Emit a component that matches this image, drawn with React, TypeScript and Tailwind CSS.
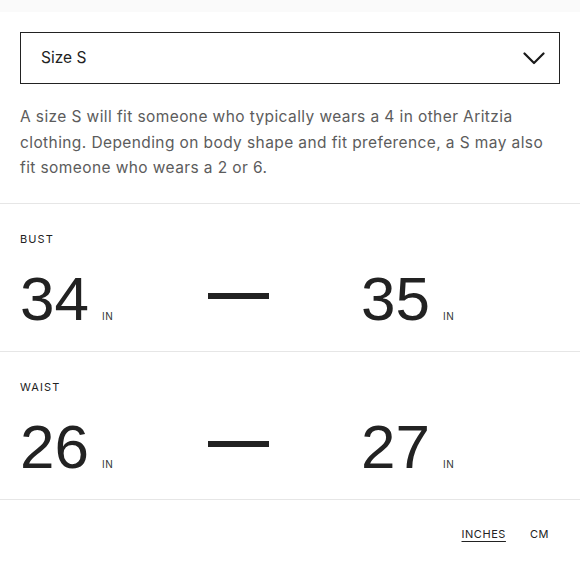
import React from 'react';

interface Measurement {
  label: string;
  min: number;
  max: number;
}

const MEASUREMENTS: Measurement[] = [
  { label: 'Bust', min: 34, max: 35 },
  { label: 'Waist', min: 26, max: 27 },
];

const DESCRIPTION = [
  'A size S will fit someone who typically wears a 4 in other Aritzia',
  'clothing. Depending on body shape and fit preference, a S may also',
  'fit someone who wears a 2 or 6.',
];

const Chevron: React.FC = () => (
  <svg width="22" height="13" viewBox="0 0 22 13" fill="none" className="text-[#1a1a1a]">
    <path d="M1.5 1.5 L11 11 L20.5 1.5" stroke="currentColor" strokeWidth="2.2" strokeLinecap="round" strokeLinejoin="round" />
  </svg>
);

const Value: React.FC<{ value: number }> = ({ value }) => (
  <div className="flex items-baseline">
    <span className="text-[62px] leading-none text-[#222]" style={{ fontFamily: '"Liberation Sans", Arial, sans-serif' }}>
      {value}
    </span>
    <span className="ml-[13px] text-[10px] tracking-[0.06em] text-[#333]">IN</span>
  </div>
);

const MeasurementRow: React.FC<{ m: Measurement }> = ({ m }) => (
  <div className="border-t border-[#e6e6e6] px-5 pt-[28px] pb-[22px]">
    <p className="text-[11px] leading-[14px] tracking-[0.1em] uppercase text-[#222]">{m.label}</p>
    <div className="mt-[23px] flex items-center h-[60px]">
      <div className="w-[188px]">
        <Value value={m.min} />
      </div>
      <div className="w-[61px] h-[6px] bg-[#222] mb-[6px]" />
      <div className="pl-[92px]">
        <Value value={m.max} />
      </div>
    </div>
  </div>
);

export default function App() {
  return (
    <div className="w-[580px] h-[580px] bg-white overflow-hidden" style={{ fontFamily: 'Inter, "Noto Sans", sans-serif' }}>
      <div className="h-3 bg-[#fafafa]" />
      <div className="px-5 pt-5">
        <button className="w-full h-[52px] border-[1.5px] border-[#222] flex items-center justify-between pl-[20px] pr-[14px]">
          <span className="text-[15.5px] text-[#222]">Size S</span>
          <Chevron />
        </button>
        <p className="mt-5 text-[15.5px] leading-[25.5px] tracking-[0.4px] text-[#5c5c5c] pb-[22px]">
          {DESCRIPTION.map((line) => (
            <span key={line} className="block whitespace-nowrap">
              {line}
            </span>
          ))}
        </p>
      </div>
      {MEASUREMENTS.map((m) => (
        <MeasurementRow key={m.label} m={m} />
      ))}
      <div className="border-t border-[#e6e6e6] flex justify-end gap-6 pr-[31px] pt-[26px]">
        <button className="text-[11px] tracking-[0.05em] text-[#222] underline underline-offset-[3px]">INCHES</button>
        <button className="text-[11px] tracking-[0.05em] text-[#222]">CM</button>
      </div>
    </div>
  );
}
